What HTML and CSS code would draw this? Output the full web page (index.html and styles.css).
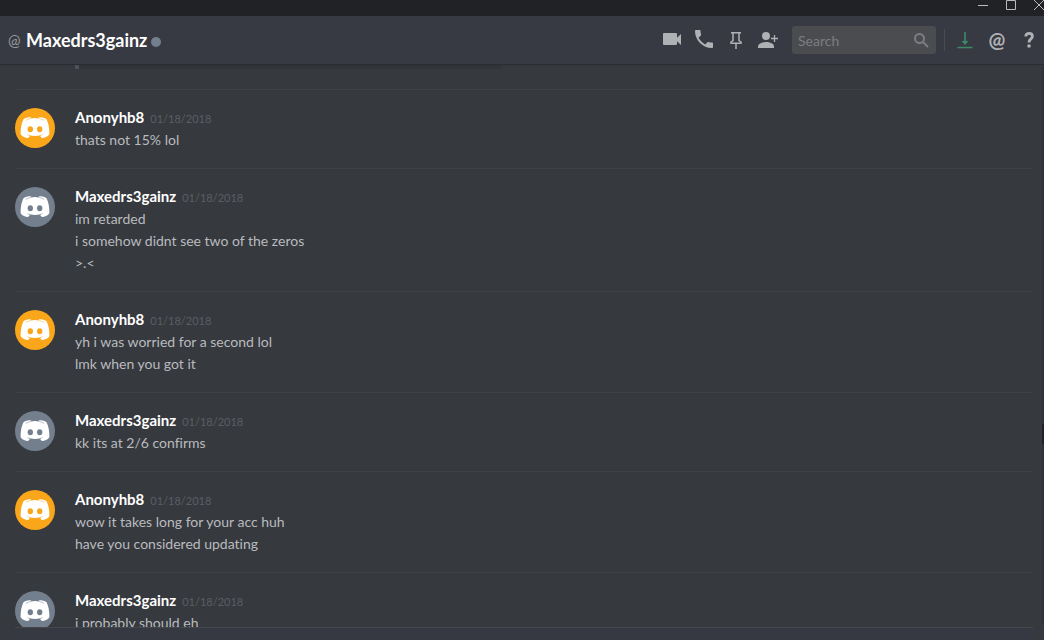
FILE: index.html
```html
<!DOCTYPE html>
<html lang="en">
<head>
<meta charset="utf-8">
<title>Maxedrs3gainz</title>
<link rel="stylesheet" href="styles.css">
</head>
<body>

<svg class="defs" aria-hidden="true">
	<symbol id="face" viewBox="0 0 40 40">
		<path fill="#fff" fill-rule="evenodd" d="M16 9.500c-2.600-.5-4.800.2-7.500 1.800C6.600 15 5.600 19.500 5.600 26.300c1.900 2.700 4.600 3.700 7.600 3.700l1.700-2c-1.400-.5-2.400-1-3.400-1.900 5 2.500 12 2.500 17 0-1 .9-2 1.400-3.400 1.900l1.700 2c3 0 5.700-1 7.600-3.700 0-6.800-1-11.300-2.900-15-2.700-1.600-4.900-2.300-7.500-1.800l-.5.900q-3.700-.6-7.400 0zM15.300 18.300a2.700 3 0 1 1 0 6a2.700 3 0 1 1 0-6zM24.700 18.300a2.700 3 0 1 1 0 6a2.700 3 0 1 1 0-6z"/>
		<path fill="none" stroke="currentColor" stroke-width=".5" d="M10.800 12.400q2.200-1.300 5.200-1.900M29.200 12.400q-2.200-1.300-5.200-1.900"/>
	</symbol>
</svg>

<div class="titlebar">
	<button class="winbtn" aria-label="Minimize"><svg width="12" height="12" viewBox="0 0 12 12"><path d="M1 5.500h10"/></svg></button>
	<button class="winbtn" aria-label="Maximize"><svg width="12" height="12" viewBox="0 0 12 12"><path d="M1.500 .5h9v9h-9z"/></svg></button>
	<button class="winbtn" aria-label="Close"><svg width="12" height="12" viewBox="0 0 12 12"><path d="M1 0l10 10M11 0L1 10"/></svg></button>
</div>

<header class="header">
	<span class="at">@</span>
	<h1 class="name">Maxedrs3gainz</h1>
	<span class="status"></span>
	<div class="tools">
		<button class="icon" aria-label="Video call"><svg width="24" height="24" viewBox="0 0 24 24"><path fill="currentColor" d="M4 5h12a1 1 0 0 1 1 1v3.800L21 6v11l-4-3.800V16a1 1 0 0 1-1 1H4a1 1 0 0 1-1-1V6a1 1 0 0 1 1-1z"/></svg></button>
		<button class="icon" aria-label="Voice call"><svg width="24" height="24" viewBox="0 0 24 24"><path fill="currentColor" d="M6.600 9.800c1.400 2.800 3.800 5.100 6.600 6.600l2.200-2.200c.3-.3.700-.4 1-.2 1.100.4 2.300.6 3.600.6.600 0 1 .4 1 1V19c0 .6-.4 1-1 1C10.600 20 3 12.400 3 3c0-.6.400-1 1-1h3.500c.6 0 1 .4 1 1 0 1.300.2 2.500.6 3.600.1.300 0 .7-.2 1z"/></svg></button>
		<button class="icon" aria-label="Pinned messages"><svg width="24" height="24" viewBox="0 0 24 24"><path fill="none" stroke="currentColor" stroke-width="1.500" d="M7 4.700h10M9 5v7.500L7 14v1.300h10V14l-2-1.500V5M12 15.500V21"/></svg></button>
		<button class="icon" aria-label="Add friends"><svg width="24" height="24" viewBox="0 0 24 24"><circle cx="10" cy="8" r="4" fill="currentColor"/><path fill="currentColor" d="M2 20v-1.500c0-3 4-4.500 8-4.500s8 1.500 8 4.500V20z"/><path stroke="currentColor" stroke-width="1.300" d="M15 10.500h7M18.500 7v7"/></svg></button>
		<div class="search">
			<input type="text" class="search-input" placeholder="Search" aria-label="Search">
			<svg class="search-icon" width="16" height="16" viewBox="0 0 16 16"><circle cx="6.500" cy="6.500" r="4.500"/><path d="M10 10l5 5"/></svg>
		</div>
		<span class="divider"></span>
		<button class="icon update" aria-label="Update ready"><svg width="24" height="24" viewBox="0 0 24 24"><path fill="none" stroke="currentColor" stroke-width="1.600" d="M12 4v11M4.500 19.500h15"/><path fill="currentColor" d="M8.500 13h7L12 17z"/></svg></button>
		<button class="icon mention" aria-label="Mentions">@</button>
		<button class="icon" aria-label="Help"><svg width="24" height="24" viewBox="0 0 24 24"><path fill="none" stroke="currentColor" stroke-width="2.800" d="M8.800 8.500c0-2.300 1.300-3.200 3.300-3.200s3.300 1.100 3.300 3c0 2.800-3.400 2.500-3.400 6.200"/><circle cx="12" cy="18" r="1.800" fill="currentColor"/></svg></button>
	</div>
</header>

<div class="chat">
	<main class="messages">
		<div class="embed"></div>

		<article class="group">
			<svg class="avatar orange"><use href="#face"/></svg>
			<div class="body">
				<h2><span class="user">Anonyhb8</span><time>01/18/2018</time></h2>
				<p>thats not 15% lol</p>
			</div>
		</article>

		<article class="group">
			<svg class="avatar"><use href="#face"/></svg>
			<div class="body">
				<h2><span class="user">Maxedrs3gainz</span><time>01/18/2018</time></h2>
				<p>im retarded</p>
				<p>i somehow didnt see two of the zeros</p>
				<p>&gt;.&lt;</p>
			</div>
		</article>

		<article class="group">
			<svg class="avatar orange"><use href="#face"/></svg>
			<div class="body">
				<h2><span class="user">Anonyhb8</span><time>01/18/2018</time></h2>
				<p>yh i was worried for a second lol</p>
				<p>lmk when you got it</p>
			</div>
		</article>

		<article class="group">
			<svg class="avatar"><use href="#face"/></svg>
			<div class="body">
				<h2><span class="user">Maxedrs3gainz</span><time>01/18/2018</time></h2>
				<p>kk its at 2/6 confirms</p>
			</div>
		</article>

		<article class="group">
			<svg class="avatar orange"><use href="#face"/></svg>
			<div class="body">
				<h2><span class="user">Anonyhb8</span><time>01/18/2018</time></h2>
				<p>wow it takes long for your acc huh</p>
				<p>have you considered updating</p>
			</div>
		</article>

		<article class="group">
			<svg class="avatar"><use href="#face"/></svg>
			<div class="body">
				<h2><span class="user">Maxedrs3gainz</span><time>01/18/2018</time></h2>
				<p>i probably should eh</p>
			</div>
		</article>
	</main>
	<div class="track"><div class="thumb"></div></div>
</div>

<footer class="composer"></footer>

</body>
</html>
```
FILE: styles.css
```css
* {
	box-sizing: border-box;
}
html, body {
	height: 100%;
	margin: 0;
}
body {
	display: flex;
	flex-direction: column;
	overflow: hidden;
	background-color: #36393e;
	color: #b9bbbe;
	font-family: Lato, "Open Sans", sans-serif;
	font-size: 14px;
	font-variant-ligatures: none;
	line-height: 22px;
}
h1, h2, p {
	margin: 0;
}
button {
	padding: 0;
	border: 0;
	background: none;
	color: inherit;
	font-family: inherit;
}
.defs {
	display: none;
}

/* window bar */
.titlebar {
	display: flex;
	flex: none;
	justify-content: flex-end;
	height: 16px;
	background-color: #202225;
}
.winbtn {
	flex: none;
	width: 28px;
	height: 12px;
}
.winbtn:last-child {
	margin-right: -9px;
}
.winbtn svg {
	display: block;
	margin: 0 auto;
	fill: none;
	stroke: #b9bbbe;
}

/* channel header */
.header {
	display: flex;
	flex: none;
	align-items: center;
	height: 48px;
	padding: 0 3px 0 8px;
	background-color: #373a42;
	box-shadow: 0 1px 1px #2b2d31;
	position: relative;
}
.at {
	width: 18px;
	color: #96989d;
	font-size: 15px;
}
.name {
	color: #fff;
	font-size: 18px;
	font-weight: bold;
}
.status {
	width: 10px;
	height: 10px;
	margin: 4px 0 0 4px;
	border-radius: 50%;
	background-color: #747f8d;
}
.tools {
	display: flex;
	align-items: center;
	gap: 8px;
	margin-left: auto;
	color: #afb1b4;
}
.icon {
	width: 24px;
	height: 24px;
}
.icon svg {
	display: block;
}
.update {
	color: #3a8a6a;
}
.mention {
	font-size: 20px;
	font-weight: bold;
	line-height: 20px;
	padding-bottom: 2px;
}
.search {
	position: relative;
	margin-left: 4px;
}
.search-input {
	display: block;
	width: 144px;
	height: 28px;
	padding: 0 28px 0 6px;
	border: 0;
	border-radius: 3px;
	background-color: #4b4c50;
	color: #b9bbbe;
	font-family: inherit;
	font-size: 14px;
}
.search-input::placeholder {
	color: #7b7d82;
}
.search-icon {
	position: absolute;
	top: 6px;
	right: 7px;
	fill: none;
	stroke: #7b7d82;
	stroke-width: 2;
}
.divider {
	width: 1px;
	height: 22px;
	background-color: #484b51;
}

/* messages */
.chat {
	display: flex;
	flex: 1;
	min-height: 0;
}
.messages {
	flex: 1;
	overflow: hidden;
	padding: 0 10px 0 15px;
}
.embed {
	width: 427px;
	height: 5px;
	margin: 0 0 20px 60px;
	border-left: 4px solid #4f545c;
	border-radius: 0 0 3px 1px;
	background-color: #323439;
}
.group {
	display: flex;
	gap: 20px;
	padding: 17px 0;
	border-top: 1px solid #3e4146;
}
.avatar {
	flex: none;
	width: 40px;
	height: 40px;
	margin-top: 1px;
	border-radius: 50%;
	background-color: #747f8d;
	color: #747f8d;
}
.orange {
	background-color: #faa61a;
	color: #faa61a;
}
.group h2 {
	display: flex;
	align-items: baseline;
	height: 22px;
	font-weight: normal;
	line-height: 20px;
}
.user {
	margin-right: 6px;
	color: #fff;
	font-size: 15px;
	font-weight: bold;
}
time {
	color: #5b5e63;
	font-size: 11px;
}
.track {
	width: 2px;
	margin: 3px 0;
	background-color: #303338;
}
.thumb {
	height: 20px;
	margin-top: 357px;
	background-color: #202225;
}
.composer {
	flex: none;
	height: 13px;
	margin: 0 11px 0 15px;
	border-top: 1px solid #44474c;
	background-color: #373942;
}
```
